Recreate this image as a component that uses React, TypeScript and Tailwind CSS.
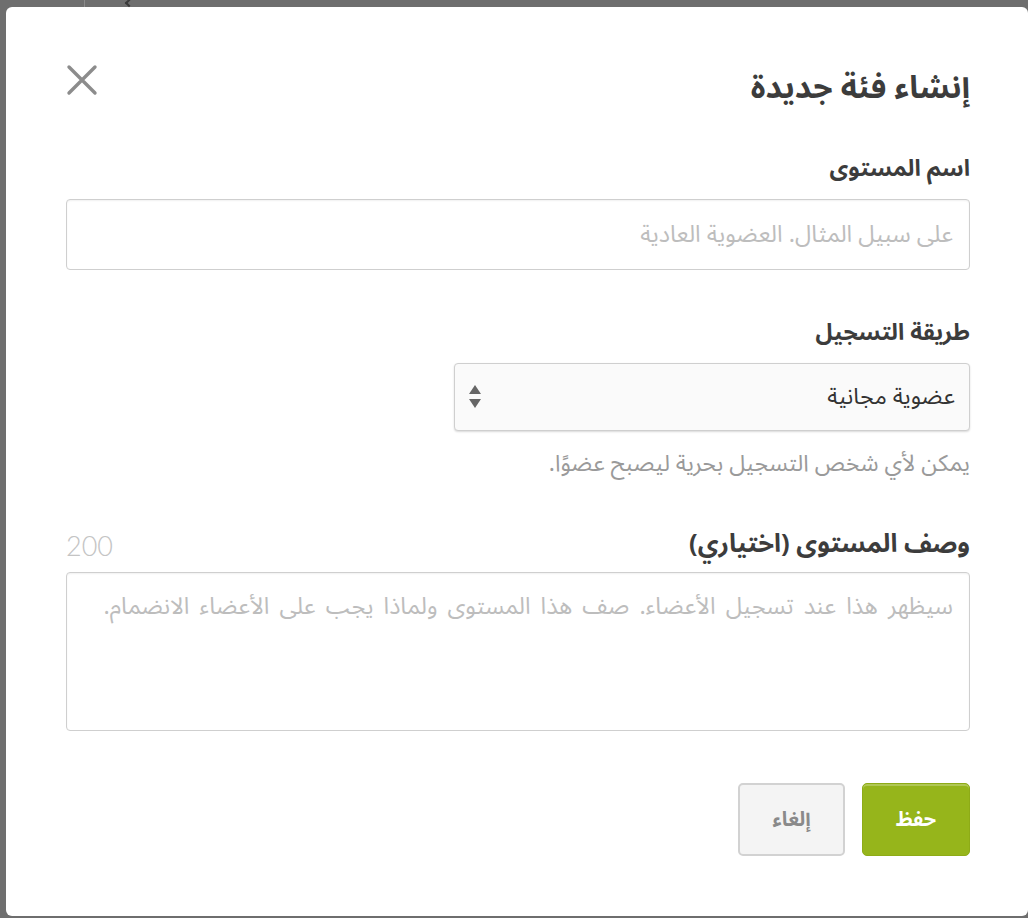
import React from "react";

export default function App() {
  const ar = { fontFamily: '"Noto Sans Arabic", "Noto Naskh Arabic", "DejaVu Sans", sans-serif' } as React.CSSProperties;
  return (
    <div className="w-[1028px] h-[918px] bg-[#6e6e6e] pt-[7px] pl-[6px] pb-[2px] overflow-hidden relative">
      <div className="absolute left-[84px] top-0 w-px h-[7px] bg-[#8a8a8a]" />
      <div className="absolute left-[126px] top-0 w-[6px] h-[6px] border-l-2 border-b-2 border-[#3a3a3a] rotate-45" />
      <div dir="rtl" style={ar} className="h-full bg-white rounded-[6px] pr-[58px] pl-[60px] pt-[56px] flex flex-col">
        <div className="flex justify-between items-start h-[60px]">
          <h1 className="text-[31.5px] leading-[44px] mt-[3px] font-bold text-[#3c3c3c]">إنشاء فئة جديدة</h1>
          <svg width="33" height="32" viewBox="0 0 33 32" className="mt-[1px] -ml-[1px]">
            <path d="M4 3 L30 29 M30 3 L4 29" stroke="#8c8c8c" strokeWidth="3.4" strokeLinecap="round" />
          </svg>
        </div>
        <label className="mt-[31px] text-[23px] leading-[30px] font-bold text-[#3c3c3c]">اسم المستوى</label>
        <div className="mt-[15px] h-[71px] border border-[#cfcfcf] rounded-[4px] flex items-center px-[16px] shadow-[inset_0_1px_2px_rgba(0,0,0,0.06)]">
          <span className="text-[23.5px] text-[#bdbdbd]">على سبيل المثال. العضوية العادية</span>
        </div>
        <label className="mt-[48px] text-[23px] leading-[30px] font-bold text-[#3c3c3c]">طريقة التسجيل</label>
        <div className="mt-[15px] w-[516px] h-[68px] bg-[#fafafa] border border-[#cfcfcf] rounded-[4px] shadow-[0_1px_2px_rgba(0,0,0,0.15)] flex items-center justify-between pr-[14px] pl-[13px]">
          <span className="text-[23px] text-[#333]">عضوية مجانية</span>
          <svg width="14" height="28" viewBox="0 0 14 28">
            <path d="M7 2 L13 11 L1 11 Z" fill="#666" />
            <path d="M1 16 L13 16 L7 25 Z" fill="#666" />
          </svg>
        </div>
        <p className="mt-[20px] text-[23px] leading-[26px] text-[#9a9a9a]">يمكن لأي شخص التسجيل بحرية ليصبح عضوًا.</p>
        <div className="mt-[52px] flex justify-between items-center h-[30px]">
          <label className="text-[25.5px] leading-[30px] font-bold text-[#3c3c3c]">وصف المستوى (اختياري)</label>
          <span dir="ltr" className="text-[27px] leading-[30px] font-light text-[#c4c4c4] mt-[4px]" style={{ fontFamily: "Lato, sans-serif" }}>200</span>
        </div>
        <div className="mt-[13px] h-[159px] border border-[#cfcfcf] rounded-[4px] px-[16px] pt-[16px] shadow-[inset_0_1px_2px_rgba(0,0,0,0.06)]">
          <span className="text-[23.5px] text-[#bdbdbd] [word-spacing:4px]">سيظهر هذا عند تسجيل الأعضاء. صف هذا المستوى ولماذا يجب على الأعضاء الانضمام.</span>
        </div>
        <div className="mt-[52px] flex gap-[17px]">
          <button className="w-[108px] h-[73px] rounded-[5px] bg-[#96b51b] border border-[#8eab17] shadow-[inset_0_2px_0_rgba(255,255,255,0.25)] text-white font-bold text-[20px]">حفظ</button>
          <button className="w-[107px] h-[73px] rounded-[5px] bg-[#f4f4f4] border-2 border-[#d2d2d2] text-[#8a8a8a] font-bold text-[20px]">إلغاء</button>
        </div>
      </div>
    </div>
  );
}
